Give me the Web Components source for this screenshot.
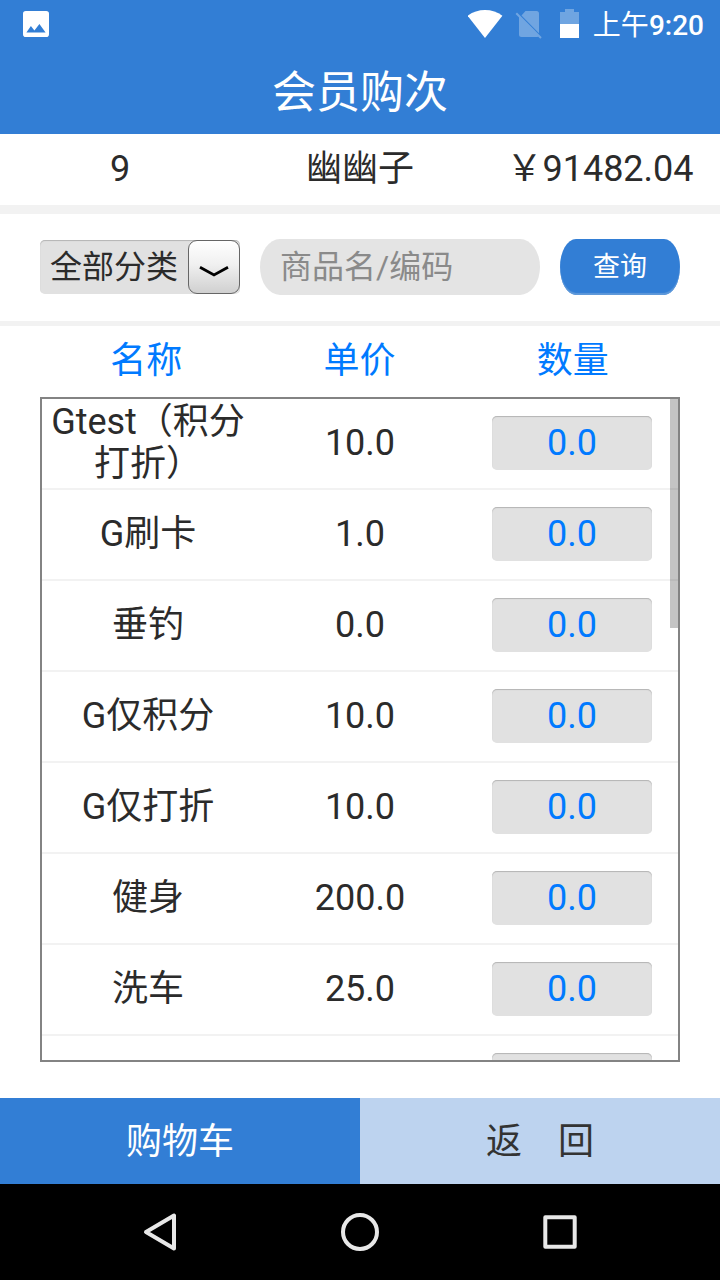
<!DOCTYPE html>
<html lang="zh-CN">
<head>
<meta charset="utf-8">
<title>会员购次</title>
<style>
html,body{margin:0;padding:0;background:#fff}
body{width:720px;height:1280px;overflow:hidden;font-family:Roboto,"Noto Sans CJK SC",sans-serif;font-size:36px;line-height:42px;color:#2b2b2b;--blue:#327ed5;--link:#007aff}
</style>
</head>
<body>
<purchase-app></purchase-app>
<script>
const define = (name, html) => customElements.define(name, class extends HTMLElement {
  constructor() {
    super();
    this.attachShadow({ mode: 'open' }).innerHTML = html;
  }
});

define('status-bar', `
<style>
:host{display:flex;align-items:center;height:48px;box-sizing:border-box;color:#fff;padding:0 16px 0 23px;font-size:28px;line-height:48px}
svg{display:block;flex:none}
.fill{flex:1}
.time{width:112px;text-align:right;padding-top:4px;white-space:nowrap}
b{font-weight:500}
</style>
<svg width="26" height="48" viewBox="0 0 26 48"><path fill="#fff" fill-rule="evenodd" d="M2.8 11h20.400a2.800 2.800 0 0 1 2.800 2.800v20.400a2.800 2.800 0 0 1-2.800 2.800H2.800A2.800 2.800 0 0 1 0 34.200v-20.400A2.800 2.800 0 0 1 2.800 11zM3.400 32.500h19.200l-6.200-8.500-5 6.400-3.500-4.400z"/></svg>
<span class="fill"></span>
<svg width="124" height="48" viewBox="468 0 124 48">
<path fill="#fff" d="M485 38 467.600 15.800C472.500 12 478.500 10 485 10s12.500 2 17.400 5.800z"/>
<g fill="#fff" opacity=".3"><path d="M525.500 11h11a2.500 2.500 0 0 1 2.500 2.500v19.700L521.500 15.600zM519 16l20 20a2.500 2.500 0 0 1-2 1h-15.500a2.500 2.500 0 0 1-2.500-2.500z"/><path d="M516.300 13.300 541 38" stroke="#fff" stroke-width="2" fill="none"/></g>
<path fill="#fff" fill-opacity=".3" d="M560 24V12h5V9h9v3h5v12z"/><path fill="#fff" d="M560 24h19v14h-19z"/>
</svg>
<span class="time">上午<b>9:20</b></span>`);

define('title-bar', `
<style>
:host{display:block;height:86px;line-height:90px;text-align:center;color:#fff;font-size:44px}
</style><slot></slot>`);

define('column-row', `
<style>
:host{display:grid;grid-template-columns:repeat(3,1fr);align-items:center;text-align:center}
</style><slot></slot>`);

define('category-select', `
<style>
:host{display:flex;width:200px;height:54px;box-sizing:border-box;background:#e1e1e1;border-radius:5px;box-shadow:inset 0 1px 1px #b4b4b4;font-size:32px;line-height:55px}
span{width:148px;padding-left:10px;box-sizing:border-box}
i{width:52px;height:54px;box-sizing:border-box;border:1px solid #666;border-radius:9px;background:linear-gradient(#fff,#f0f0f0 45%,#d0d0d0)}
svg{display:block}
</style><span><slot></slot></span><i><svg width="50" height="52" viewBox="0 0 50 52"><path d="M11 26.200 25 34 39 26.200" fill="none" stroke="#000" stroke-width="2.800"/></svg></i>`);

define('search-field', `
<style>
:host{display:block;width:280px;height:56px;box-sizing:border-box;padding-left:20px;background:#e4e4e4;border-radius:20px/28px;color:#8a8a8a;font-size:32px;line-height:56px}
</style><slot></slot>`);

define('query-button', `
<style>
:host{display:block;width:120px;height:56px;background:var(--blue);border-radius:16px/28px;box-shadow:inset 0 -2px 1px #5f99da;color:#fff;font-size:27px;line-height:57px;text-align:center}
</style><slot></slot>`);

define('product-row', `
<style>
:host{display:grid;grid-template-columns:repeat(3,212px);align-items:center;height:89px;border-bottom:2px solid #f2f2f2;text-align:center}
.name{padding:0 6px 2px}
.price{padding-bottom:1px}
.qty{justify-self:center;width:160px;height:54px;line-height:55px;background:#e1e1e1;border-radius:5px;box-shadow:inset 0 1px 1px #b4b4b4;color:var(--link);margin-top:-1px}
</style>
<div class="name"><slot name="name"></slot></div><div class="price"><slot name="price"></slot></div><div class="qty"><slot></slot></div>`);

define('product-list', `
<style>
:host{display:block;position:relative;height:665px;margin:0 40px;box-sizing:border-box;border:2px solid #838383;overflow:hidden}
.thumb{position:absolute;top:0;right:0;width:8px;height:229px;background:rgba(0,0,0,.23)}
</style><slot></slot><div class="thumb"></div>`);

define('action-bar', `
<style>
:host{display:grid;grid-template-columns:1fr 1fr;height:86px;line-height:84px;text-align:center}
div{padding-top:2px}
.cart{background:var(--blue);color:#fff}
.back{background:#bdd3ef;color:#333}
</style><div class="cart"><slot name="cart"></slot></div><div class="back"><slot name="back"></slot></div>`);

define('nav-bar', `
<style>:host{display:block;height:96px;background:#000}svg{display:block}</style>
<svg width="720" height="96" viewBox="0 0 720 96" fill="none" stroke="#e8e8e8" stroke-width="4" stroke-linejoin="round">
<path d="M174 31.500v33L146 48z"/><circle cx="360" cy="48" r="17"/><rect x="545.300" y="33.300" width="29.400" height="29.400"/></svg>`);

const products = [['Gtest（积分打折）','10.0'],['G刷卡','1.0'],['垂钓','0.0'],['G仅积分','10.0'],['G仅打折','10.0'],['健身','200.0'],['洗车','25.0'],['','']];
define('purchase-app', `
<style>
:host{display:flex;flex-direction:column;width:720px;height:1280px}
header{background:var(--blue)}
.member{height:71px;box-sizing:border-box;padding-bottom:2px}
.bar{height:9px;background:#f2f2f2}
.filter{display:flex;gap:20px;align-items:center;height:107px;padding:0 40px 2px;box-sizing:border-box}
.thin{height:5px;background:#f2f2f2}
.head{height:71px;margin:0 40.5px 0 39.5px;box-sizing:border-box;padding-bottom:2px;color:var(--link)}
action-bar{margin-top:36px}
.gap{display:inline-block;width:36px}
</style>
<header><status-bar></status-bar><title-bar>会员购次</title-bar></header>
<column-row class="member"><span>9</span><span>幽幽子</span><span>￥91482.04</span></column-row>
<div class="bar"></div>
<div class="filter"><category-select>全部分类</category-select><search-field>商品名/编码</search-field><query-button>查询</query-button></div>
<div class="thin"></div>
<column-row class="head"><span>名称</span><span>单价</span><span>数量</span></column-row>
<product-list>${products.map(([n,p]) => `<product-row><span slot="name">${n}</span><span slot="price">${p}</span>${p ? '0.0' : ''}</product-row>`).join('')}</product-list>
<action-bar><span slot="cart">购物车</span><span slot="back">返<span class="gap"></span>回</span></action-bar>
<nav-bar></nav-bar>`);
</script>
</body>
</html>
